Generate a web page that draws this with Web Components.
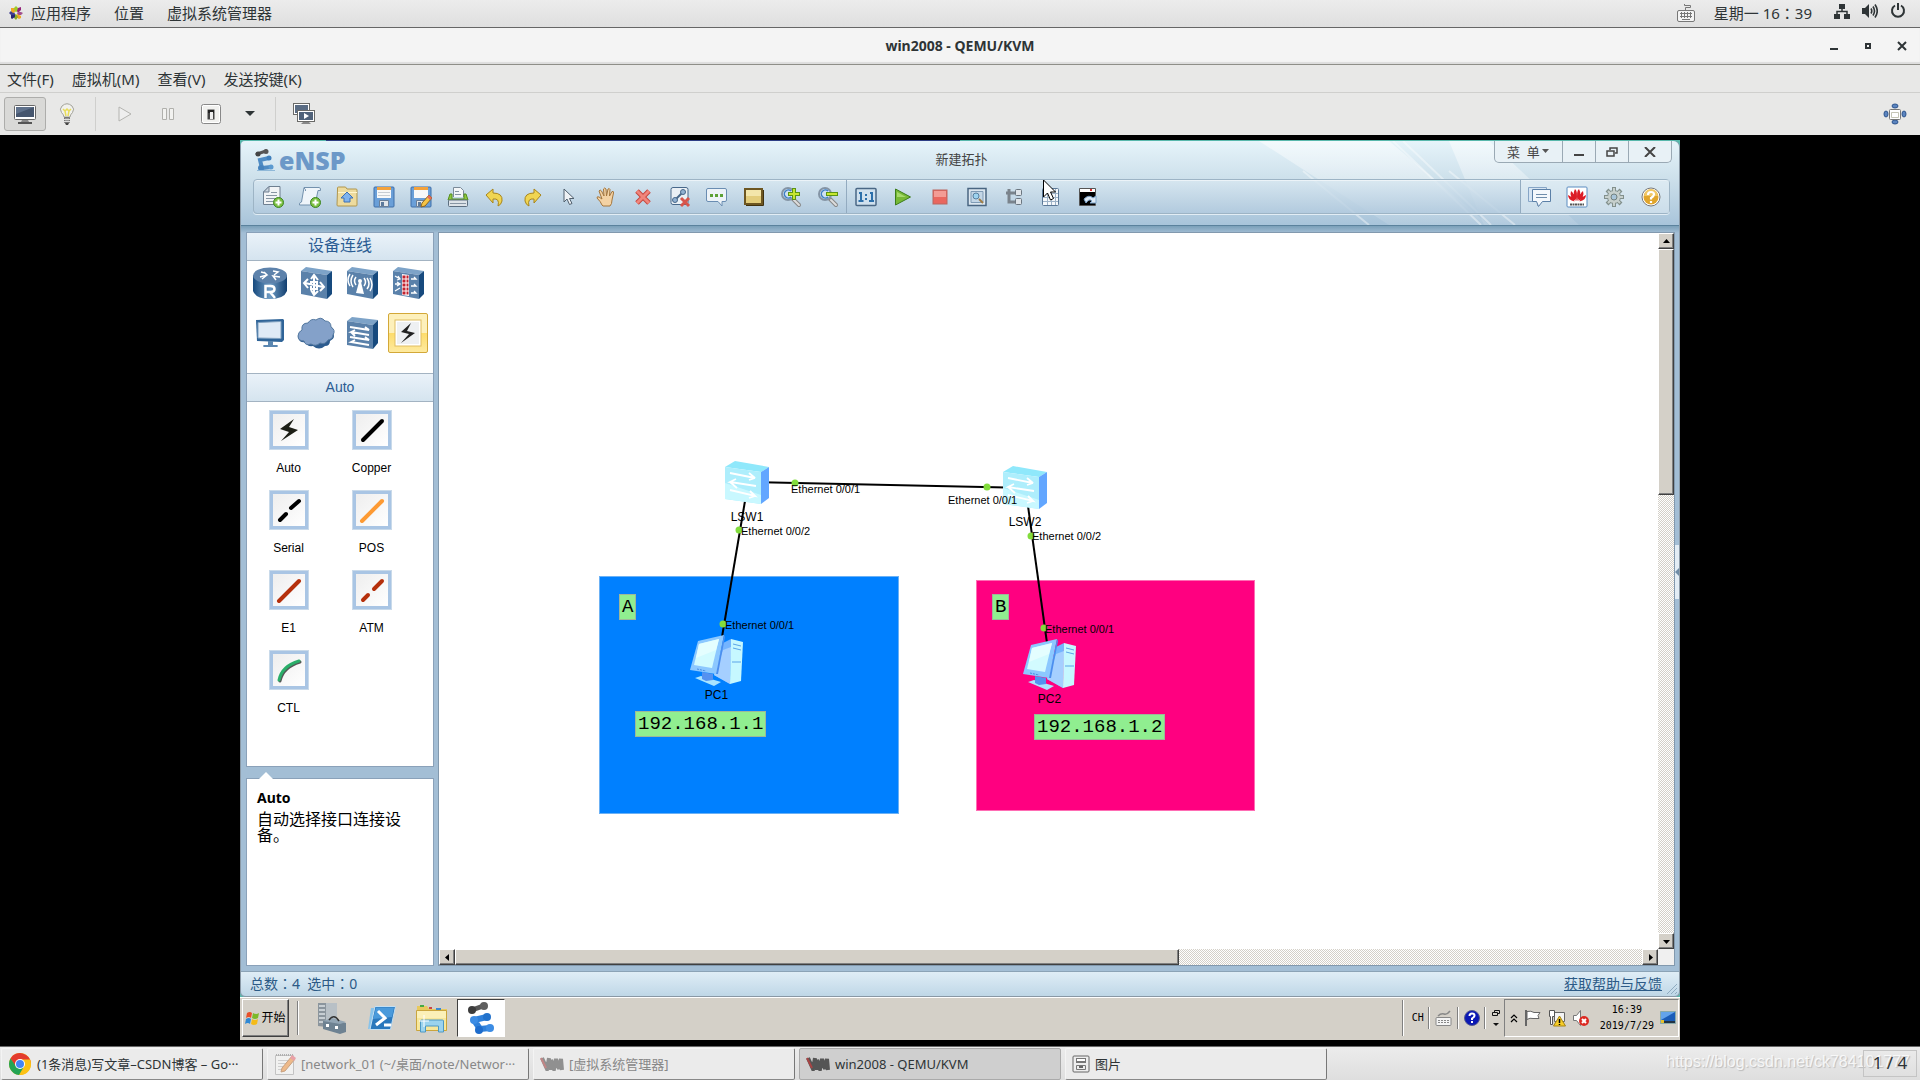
<!DOCTYPE html>
<html lang="zh-CN">
<head>
<meta charset="utf-8">
<title>win2008 - QEMU/KVM</title>
<style>
  html, body { height: 100%; }
  body {
    margin: 0;
    overflow: hidden;
    background: #000;
    color: #2e3436;
    font: 15px/20px "Noto Sans", "Noto Sans CJK SC", sans-serif;
  }
</style>
</head>
<body>
<host-desktop></host-desktop>

<script>
// name: [width, height, markup]
const icons = {
  gnome: [14, 14, `<path fill="#9ccd2a" d="M7 0l2 2v3l-2 1-2-1V2z"/><path fill="#932279" d="M9 2l3-1v3l-3 3-1-2z"/><path fill="#a14f8c" d="M10 6h2l2 1-2 2H9L8 7z"/><path fill="#efa724" d="M8 8l4 2v2l-2 1-3-2z"/><path fill="#8aab2a" d="M5 9l2-1 2 3-2 3-2-2z"/><path fill="#262577" d="M2 9l4-1v3l-3 2-1-1z"/><path fill="#3e3d8f" d="M0 7l2-2 4 2-1 2H2z"/><path fill="#efa724" d="M2 2h3l1 4-2 1-2-2z"/>`],
  keyboard: [20, 20, `<g fill="none" stroke="#777"><path d="M9.500 7V4.500h5V2.500h-6V1"/><rect x="1.500" y="7.500" width="17" height="11" rx="1.500" fill="#f4f4f4"/><path d="M4 10.500h12M4 13.500h12M6 16.500h8M5.500 9v6M8.500 9v6M11.500 9v6M14.500 9v6"/></g>`],
  network: [16, 16, `<path fill="#2e3436" d="M5 1h6v5H5zM0 11h6v5H0zM10 11h6v5h-6z"/><path fill="none" stroke="#2e3436" stroke-width="1.500" d="M8 6v3M3 11V8.500h10V11"/>`],
  volume: [16, 16, `<path fill="#2e3436" d="M0 5h3l4-4v14l-4-4H0z"/><path fill="none" stroke="#2e3436" stroke-width="1.600" d="M9 5.500q1.500 2.500 0 5M11 3.500q3 4.500 0 9M13 1.500q4.500 6.500 0 13"/>`],
  power: [16, 16, `<path fill="none" stroke="#2e3436" stroke-width="2" d="M5 2.500a6 6 0 1 0 6 0M8 0v7"/>`],
  wmin: [10, 10, `<path fill="#2e3436" d="M1 7h8v2H1z"/>`],
  wmax: [10, 10, `<path fill="none" stroke="#2e3436" stroke-width="2" d="M3 3h4v4H3z"/>`],
  wclose: [10, 10, `<path stroke="#2e3436" stroke-width="2" d="M1 1l8 8M9 1L1 9"/>`],
  monitor: [22, 20, `<rect x=".500" y="1.500" width="21" height="14" rx="1" fill="#fff" stroke="#666"/><path fill="#46566e" d="M2 3h18v10H2z"/><path fill="#60728c" d="M2 3h18L2 10z"/><path fill="#888" d="M8 16h6l1 2H7z"/><path fill="#555" d="M4 18h14v2H4z"/>`],
  bulb: [16, 22, `<path fill="#f1f1ec" stroke="#a2a29a" d="M5 14q0-2-2.500-4.500Q0 6 3 3q5-4.500 10 0 3 3 .500 6.500Q11 12 11 14z"/><path fill="none" stroke="#e8dc5a" stroke-width="1.500" d="M4 6l2 2 2-2 2 2 2-2M6 8l1 5M10 8l-1 5"/><path fill="#999" stroke="#777" d="M5.500 14.500h5v5h-5z"/><path stroke="#ddd" d="M5 16.500h6M5 18.500h6"/><path fill="#444" d="M6 20h4l-1 2H7z"/>`],
  play: [14, 16, `<path fill="#eee" stroke="#b4b4b0" d="M1 1l12 7-12 7z"/>`],
  pause: [14, 14, `<path fill="#f2f2f0" stroke="#b0b0ac" d="M1.500 1.500h4v11h-4zM8.500 1.500h4v11h-4z"/>`],
  shutdown: [20, 20, `<rect x=".500" y=".500" width="19" height="19" rx="2" fill="#fff" stroke="#888"/><rect x="2" y="2" width="16" height="16" fill="#f1f1ef"/><rect x="6.500" y="5.500" width="7" height="10" fill="#444"/><path fill="#222" d="M7 6h6v3H7z"/><path fill="#eee" d="M9 8h3v7H9z"/>`],
  down: [10, 6, `<path fill="#2e3436" d="M0 0h10L5 5z"/>`],
  snapshot: [22, 22, `<g stroke="#6a6a68"><rect x=".500" y=".500" width="16" height="11" fill="#fff"/><path stroke="none" fill="#5a6c84" d="M2 2h13v8H2z"/><rect x="4.500" y="7.500" width="17" height="11" fill="#fff"/><path stroke="none" fill="#50627a" d="M6 9h14v8H6z"/></g><path fill="#fff" d="M11 10l5 3-5 3z"/><path fill="#888" d="M10 19h6l2 2H8z"/>`],
  fullscreen: [24, 22, `<g fill="#5b84bf" stroke="#2f568e"><ellipse cx="12" cy="3" rx="3" ry="2"/><ellipse cx="12" cy="19" rx="3" ry="2"/><ellipse cx="3" cy="11" rx="2" ry="3"/><ellipse cx="21" cy="11" rx="2" ry="3"/></g><rect x="6.500" y="6.500" width="11" height="10" rx="1" fill="#fff" stroke="#777"/><path fill="none" stroke="#c5c5b5" d="M8.500 9.500h7v5h-7z"/>`],

  ensp: [20, 22, `<path stroke="#555" stroke-width="3" stroke-linecap="round" d="M2 5l9-3"/><circle cx="3" cy="5" r="2.500" fill="#444"/><circle cx="11" cy="2.500" r="2.500" fill="#555"/><path fill="none" stroke="#4f8cc4" stroke-width="4" stroke-linecap="round" d="M14 9L5 11l2 8 9-1"/><circle cx="14" cy="9" r="2.500" fill="#3f7fbc"/><circle cx="6" cy="19" r="3" fill="#4683bd"/><circle cx="16" cy="18" r="2.500" fill="#5b9ad0"/><path stroke="#8fb8d8" d="M2 21.500h18"/>`],
  enspBig: [28, 32, `<path stroke="#555" stroke-width="5" d="M5 8l14-5"/><circle cx="5" cy="8" r="4" fill="#3c3c3c"/><circle cx="17" cy="4" r="4" fill="#606060"/><path fill="none" stroke="#2f80da" stroke-width="6" stroke-linejoin="round" d="M20 15l-13 3 6 9 10-1"/><circle cx="20" cy="15" r="4" fill="#2272cc"/><circle cx="7" cy="18" r="4" fill="#3c8ce4"/><circle cx="12" cy="28" r="4" fill="#1e6ccc"/><circle cx="23" cy="26" r="4" fill="#3c8ce4"/>`],
  newTopo: [22, 22, `<path fill="#f2f4f6" stroke="#6e7f90" d="M7 .500h11v18H1.500V6z"/><path fill="#c9d4de" stroke="#6e7f90" d="M7 .500V6H1.500z"/><path stroke="#8795a3" d="M9 6.500h6M4 9.500h11M4 12.500h9M4 15.500h7"/><circle cx="16.500" cy="16.500" r="5" fill="#7cc142" stroke="#3b8420"/><path stroke="#fff" stroke-width="2" d="M16.500 13.500v6M13.500 16.500h6"/>`],
  newPaper: [24, 22, `<path fill="#eff5fa" stroke="#7391ad" d="M6 1.500h15q2 0 1.500 3H20L17 19H1.500q-1-2 2-3z"/><path stroke="#7391ad" d="M6 2q2 1 1.500 3"/><circle cx="17.500" cy="16.500" r="5" fill="#7cc142" stroke="#3b8420"/><path stroke="#fff" stroke-width="2" d="M17.500 13.500v6M14.500 16.500h6"/>`],
  open: [22, 22, `<path fill="#eddb9e" stroke="#b0964d" d="M1.500 4V2q0-1 1-1h7l1.500 2h9q1 0 1 1v15q0 1-1 1h-18q-1 0-1-1z"/><path stroke="#fff5cc" d="M2 6.500h19"/><path fill="#7fb3ee" stroke="#3e70b4" d="M11 6l6 6h-3v4H8v-4H5z"/>`],
  save: [22, 22, `<rect x="1" y="1" width="20" height="20" rx="1" fill="#6a9fd8" stroke="#3f6ea8"/><path fill="#f8f8f8" d="M4 4h14v8H4z"/><path fill="#f3a23c" d="M4 1h14v3H4z"/><path stroke="#c8cdd2" d="M5 6.500h12M5 9.500h12"/><path fill="#e2e6ea" stroke="#6a7f98" d="M6.500 14.500h9v6h-9z"/><path fill="#5d7a9c" d="M8 16h3v4H8z"/>`],
  saveAs: [22, 22, `<rect x="1" y="1" width="20" height="20" rx="1" fill="#6a9fd8" stroke="#3f6ea8"/><path fill="#f8f8f8" d="M4 4h14v8H4z"/><path fill="#f3a23c" d="M4 1h14v3H4z"/><path fill="#e2e6ea" stroke="#6a7f98" d="M6.500 14.500h9v6h-9z"/><path fill="#5d7a9c" d="M8 16h3v4H8z"/><path fill="#f6c445" stroke="#8a6424" d="M19 9l3 3-7 8-4 1 1-4z"/><path fill="#e26a5c" d="M19 9l3 3-2 2-3-3z"/>`],
  print: [22, 22, `<path fill="#f4f6f8" stroke="#7b8a98" d="M6.500 11V1.500h7l3 3V11"/><path stroke="#8795a3" d="M8 5.500h4M8 8.500h6"/><path fill="#8ec73c" stroke="#568f1d" d="M3 8h2v5h12V8h2l2 6H1z"/><rect x="1.500" y="14" width="19" height="6.500" rx="1" fill="#dde3e8" stroke="#5c6e80"/><path stroke="#8795a3" d="M3 17.500h16"/>`],
  undo: [20, 20, `<path fill="#f0d552" stroke="#a8851c" d="M1 8l7-6v4q10 0 9 8-1 4-4 5 2-8-5-7v4z"/>`],
  redo: [20, 20, `<path fill="#f0d552" stroke="#a8851c" d="M19 8l-7-6v4q-10 0-9 8 1 4 4 5-2-8 5-7v4z"/>`],
  pointer: [14, 18, `<path fill="#eef1f4" stroke="#51606e" d="M2 1v13l3-3 2.500 5.500 2.500-1-2.500-5H12z"/>`],
  hand: [20, 20, `<path fill="#f3d2a4" stroke="#a5763c" d="M6 18q-1-3-5-7 0-2 2-1l3 2-3-8q1-2 2.500 0L8 9 7.500 2q1-2 2.500 0l.500 7L12 2q1.500-1 2 .500L13.500 9 16 4.500q2-.500 1.500 1.500L16 13q0 4-2 6H7z"/>`],
  remove: [18, 18, `<path stroke="#c6473e" stroke-width="5" d="M3 3l12 12M15 3L3 15"/><path stroke="#f0857b" stroke-width="3" d="M3 3l12 12M15 3L3 15"/>`],
  unlink: [22, 22, `<rect x="2" y="1.500" width="17" height="17" rx="2" fill="#eaf0f5" stroke="#48688a"/><path stroke="#48688a" stroke-width="2" d="M5 15L15 5"/><circle cx="6" cy="14" r="2.500" fill="#91b2d2" stroke="#48688a"/><circle cx="14" cy="6" r="2.500" fill="#91b2d2" stroke="#48688a"/><path stroke="#d8554b" stroke-width="3" d="M12 12l8 8M20 12l-8 8"/>`],
  text: [22, 20, `<path fill="#edf3f8" stroke="#6a8db2" d="M2 1.500h17q1.500 0 1.500 1.500v10q0 1.500-1.500 1.500h-3V19l-4-4.500H2Q.500 14.500.500 13V3Q.500 1.500 2 1.500z"/><path stroke="#5da136" stroke-width="3" stroke-dasharray="3 2" d="M4 8.500h14"/>`],
  palette: [20, 18, `<rect x="1" y="1" width="17" height="15" fill="#e3cd7b" stroke="#6d5621" stroke-width="2"/><path fill="#f3e6aa" d="M2 2h15v6H2z"/><path stroke="#40310f" d="M2 17.500h17.500V2"/>`],
  zoomIn: [22, 22, `<path stroke="#888" stroke-width="4" stroke-linecap="round" d="M13 13l6 6"/><path stroke="#ddd" stroke-width="2" stroke-linecap="round" d="M14 14l5 5"/><circle cx="8" cy="8" r="6" fill="#cfe1f1" stroke="#8494a5" stroke-width="2"/><path fill="none" stroke="#3f7fc4" stroke-width="1.500" d="M11 5a4 4 0 1 0 0 6"/><path stroke="#5a9416" stroke-width="4" d="M14 2v12M8 8h12"/><path stroke="#c7e631" stroke-width="2" d="M14 3v10M9 8h10"/>`],
  zoomOut: [22, 22, `<path stroke="#888" stroke-width="4" stroke-linecap="round" d="M13 13l6 6"/><path stroke="#ddd" stroke-width="2" stroke-linecap="round" d="M14 14l5 5"/><circle cx="8" cy="8" r="6" fill="#cfe1f1" stroke="#8494a5" stroke-width="2"/><path fill="none" stroke="#3f7fc4" stroke-width="1.500" d="M11 5a4 4 0 1 0 0 6"/><path stroke="#5a9416" stroke-width="4" d="M9 8h12"/><path stroke="#c7e631" stroke-width="2" d="M10 8h10"/>`],
  fit: [22, 20, `<rect x="1" y="1.500" width="20" height="17" rx="1" fill="#cfe0ee" stroke="#4a6785" stroke-width="1.500"/><path fill="none" stroke="#2c6faa" stroke-width="2" d="M4 6h2v7M3.500 14h5M15 6h2v7M14 14h5"/><path fill="#2c6faa" d="M10 7h2v2h-2zM10 11h2v2h-2z"/>`],
  start: [18, 18, `<path fill="#77b936" stroke="#3c7d1b" d="M1.500 1l15 8-15 8z"/><path fill="#a6d96c" d="M3 4l9 5H3z"/>`],
  stop: [16, 16, `<rect x="1" y="1" width="14" height="14" fill="#e9675f" stroke="#b96661"/><path fill="#f39c95" d="M2 2h12v6H2z"/>`],
  capture: [20, 20, `<rect x="1" y="1.500" width="18" height="17" fill="#dce7f0" stroke="#496581" stroke-width="1.500"/><path fill="#c3d6e6" stroke="#7f9bb5" d="M4 4.500h12v11H4z"/><circle cx="9" cy="9" r="3" fill="#9dd3ef" stroke="#58809f"/><path stroke="#a07d45" stroke-width="2" d="M12 12l4 4"/>`],
  tree: [18, 18, `<path fill="none" stroke="#7a838c" stroke-width="3" d="M4 1v13h7M1 5h10"/><rect x="10.500" y="1.500" width="6" height="6" rx="1" fill="#dfe4e9" stroke="#6b7680"/><rect x="10.500" y="10.500" width="6" height="6" rx="1" fill="#dfe4e9" stroke="#6b7680"/>`],
  table: [18, 20, `<rect x=".500" y="1.500" width="16" height="17" rx="1" fill="#f5f8fb" stroke="#5b7897"/><path stroke="#9db2c7" d="M1 6.500h15M1 10.500h15M1 14.500h15M5.500 2v16M9.500 2v16M13.500 2v16"/>`],
  console: [20, 20, `<path fill="#fff" stroke="#555" d="M1.500 1.500h16v17h-16z"/><path fill="#000" d="M2 5h15v13H2z"/><path fill="#d33" d="M12 2h2v2h-2z"/><path fill="#dfeaf5" stroke="#7ba4cb" d="M6 12q5-5 9-1l3-2v7h-6l2-2q-3-3-6 2z"/>`],
  chat: [24, 22, `<path fill="#d5e4f2" stroke="#86a5c6" d="M.500 1.500h18v14h-4l-5 4v-4h-9z"/><path fill="#f4f8fc" stroke="#5b80a7" d="M4.500 3.500h18v12h-8l-4 5-2-5h-4z"/><path stroke="#6f8dab" d="M8 8.500h11M8 11.500h11"/>`],
  huawei: [22, 22, `<rect x="1" y="1" width="20" height="20" rx="1" fill="#fff" stroke="#5b8cc0"/><g fill="#dc1c26"><path d="M10.500 15Q6 8 9 3q3 2 1.500 12zM11.500 15Q16 8 13 3q-3 2-1.500 12zM9.500 15Q3 11 5 5q4 3 4.500 10zM12.500 15Q19 11 17 5q-4 3-4.500 10zM8.500 15.500Q2 14 2 9q5 2 6.500 6.500zM13.500 15.500Q20 14 20 9q-5 2-6.500 6.500z"/></g><path stroke="#555" stroke-width="2" stroke-dasharray="2 .500" d="M4 18.500h14"/>`],
  gear: [20, 20, `<path stroke="#82908c" stroke-width="4" d="M10 0v20M0 10h20M3 3l14 14M17 3L3 17"/><circle cx="10" cy="10" r="6.500" fill="#c7d0cd" stroke="#82908c"/><path stroke="#c7d0cd" stroke-width="2" d="M10 1v18M1 10h18M4 4l12 12M16 4L4 16"/><circle cx="10" cy="10" r="3" fill="#a8c4d8" stroke="#71807e"/>`],
  help: [20, 20, `<circle cx="10" cy="10" r="9" fill="#fff" stroke="#777"/><circle cx="10" cy="10" r="7.500" fill="#e0a52c"/><path fill="#f0c766" d="M3 9a7 7 0 0 1 14 0z"/><path fill="none" stroke="#fff" stroke-width="2.200" d="M7 8q0-3 3-3t3 2.500Q13 9 10 11v1.500M10 14v2"/>`],
  restore: [12, 10, `<path fill="none" stroke="#444" stroke-width="1.500" d="M4 3V1h7v5H9M1 4h7v5H1z"/>`],
  bigX: [12, 10, `<path stroke="#444" stroke-width="2" d="M1 0l10 10M11 0L1 10"/>`],
  minus: [12, 10, `<path fill="#444" d="M1 7h10v2H1z"/>`],
  smallDown: [8, 5, `<path fill="#555" d="M0 0h7L3.500 4z"/>`],
  cursor: [14, 24, `<path fill="#fff" stroke="#000" d="M1.500 1v17l4-4 3 7 3-1.500-3-6.500h5z"/>`],

  router: [36, 32, `<defs><linearGradient id="g"><stop offset="0" stop-color="#174a7e"/><stop offset=".500" stop-color="#6f9cc4"/><stop offset="1" stop-color="#123f70"/></linearGradient></defs><path fill="url(#g)" d="M1 8v16q3 8 17 8t17-8V8z"/><ellipse cx="18" cy="8.500" rx="17" ry="8" fill="#5d82ab"/><path fill="none" stroke="#fff" stroke-width="1.500" d="M8 10l7-2-3-3M15 8l-5 4M21 4l5 1-4 3M28 10l-7-1 3 4M9 5l4 1"/><path fill="none" stroke="#fff" stroke-width="2.500" d="M13.500 31V19h5q4 0 4 3t-4 3h-5M18 25l5 6"/>`],
  switchBox: [32, 32, `<path fill="#7da3c8" d="M1 4l5-4 26 4-5 4z"/><path fill="#174a7e" d="M27 8l5-4v23l-5 5z"/><path fill="#5a81aa" d="M1 4l26 4v24L1 27z"/><path fill="none" stroke="#fff" stroke-width="2" d="M14 9v18M5 16l18 4M11 12l3-4 4 5M11 23l3 5 4-4M8 12l-4 4 4 5M20 15l4 5-4 4M11 15h6v7h-6z"/>`],
  wlan: [32, 32, `<path fill="#7da3c8" d="M1 4l5-4 26 4-5 4z"/><path fill="#174a7e" d="M27 8l5-4v23l-5 5z"/><path fill="#5a81aa" d="M1 4l26 4v24L1 27z"/><path fill="#fff" d="M13 15h2l3 12-8-1z"/><circle cx="14" cy="14" r="2" fill="#fff"/><path fill="none" stroke="#fff" stroke-width="1.500" d="M10 10q-3 4 0 8M7 8q-4 6 0 12M4 7q-4 6 0 12M18 11q3 4 0 8M21 11q4 6 0 11M24 11q4 7 0 13"/>`],
  firewall: [32, 32, `<path fill="#7da3c8" d="M1 4l5-4 26 4-5 4z"/><path fill="#174a7e" d="M27 8l5-4v23l-5 5z"/><path fill="#5a81aa" d="M1 4l26 4v24L1 27z"/><path fill="#fff" d="M10 7l7 1v21l-7-1z"/><path stroke="#c2222e" stroke-width="3" stroke-dasharray="3 1" d="M10.500 10h6M10.500 14h6M10.500 18h6M10.500 22h6M10.500 26h6"/><path fill="none" stroke="#fff" stroke-width="1.300" d="M3 9l5 3M3 17h5M3 24l5-3M6 9l2 3-3 1M5 15l3 2-3 2M19 12h5l-2-2M19 19h5l-2-2M19 26h5l-2-2"/>`],
  pcFlat: [30, 30, `<path fill="#2f6498" d="M1 2l27-1 1 1v20l-2 2-25-1z"/><path fill="#dfeaf6" stroke="#7fa0c0" d="M3 4.500l23-1v17l-23-.500z"/><path fill="#5b87b1" d="M13 23h5v4h4q2 1 0 2H9q-2-1 0-2h4z"/>`],
  cloud: [38, 32, `<path fill="#2d5c8f" d="M5 14q-6 4-3 9 2 3 6 2 2 5 8 4 6 5 12 0 5 0 5-5 6-3 3-8V11z"/><path fill="#84a1c9" stroke="#53789f" d="M5 13q-1-7 6-7 3-5 8-3 5-4 9 1 6 0 6 6 5 3 2 8 0 4-5 5-3 5-8 3-4 4-9 1-6 2-7-3-6 0-6-5 0-4 4-6z"/>`],
  others: [32, 32, `<path fill="#7da3c8" d="M1 4l5-4 26 3-5 5z"/><path fill="#174a7e" d="M27 8l5-5v23l-5 6z"/><path fill="#5a81aa" d="M1 4l26 4v24L1 28z"/><path fill="none" stroke="#fff" stroke-width="1.800" d="M4 10l19 3-4-3M23 18L5 15l4-2M5 15l4 4M4 20l19 3-4-3M23 28L5 25l4-2"/>`],
  autoBtn: [28, 28, `<rect x="1" y="1" width="26" height="26" fill="#fff" stroke="#e0bd62"/><path fill="#eef0f2" d="M3 3h22v22H3z"/><path fill="#222" d="M17 4L7 13l8 2-8 9 14-10-8-2z"/>`],

  cAuto: [26, 26, `<path fill="#1d1f16" d="M18 2L4 12l9 3-8 9 17-11-9-3z"/>`],
  cCopper: [26, 26, `<path stroke="#000" stroke-width="4" stroke-linecap="round" d="M4 23L23 4"/>`],
  cSerial: [26, 26, `<path stroke="#000" stroke-width="4" stroke-linecap="round" d="M4 23l6-6M15 11l8-7"/>`],
  cPos: [26, 26, `<path stroke="#fd9a33" stroke-width="4" stroke-linecap="round" d="M3 24L23 4"/>`],
  cE1: [26, 26, `<path stroke="#b5300c" stroke-width="4" stroke-linecap="round" d="M3 24L23 4"/>`],
  cAtm: [26, 26, `<path stroke="#b5300c" stroke-width="4" stroke-linecap="round" d="M4 23l5-5M15 12l8-8"/>`],
  cCtl: [26, 26, `<path fill="none" stroke="#555" stroke-width="3" stroke-linecap="round" d="M4 24Q7 10 24 5"/><path fill="none" stroke="#2aae69" stroke-width="3" stroke-linecap="round" d="M3 23Q6 9 23 4"/>`],

  lsw: [44, 44, `<path fill="#8fe8fb" d="M0 6L10 0l34 6-8 5z"/><path fill="#62a6ff" d="M36 11l8-5v31l-8 6z"/><path fill="#aeeefc" d="M0 6l36 5v32L0 38z"/><path fill="#c9f8ff" d="M0 22l36 12v9L0 38z"/><path fill="none" stroke="#fff" stroke-width="1.800" d="M5 12l25 5-6-5M30 17l-6 2M31 25L5 21l6-3M5 21l7 6M5 29l25 6-5-5M30 35l-6 2"/>`],
  pc: [53, 52, `<path fill="#74b4ff" d="M33 8l8-4-1 45-16-9z"/><path fill="#a5cfff" d="M33 15l8-3-1 37-16-9z"/><path fill="#c6f8ff" d="M41 4l12 3-2 39-11 3z"/><path stroke="#5aa4e8" d="M43 9l8 2M43 13l8 2M42 27h9"/><path fill="#a9e4ff" d="M5 43l6-2 20 6-7 4z"/><path fill="#5591f0" d="M12 37l11 2v6l-7 1-4-2z"/><path fill="#8cc8ff" d="M8 6l26-6-8 39-26-4z"/><path fill="#4b8eee" d="M34 0l1 2-7 37h-2z"/><path fill="#d2fbff" d="M9 9l20-5-7 29-18-3z"/><path fill="#e4feff" d="M9 9l20-5-3 11L6 23z"/><path stroke="#4a8ce0" stroke-dasharray="2 1" d="M7 34l9 2"/>`],

  winFlag: [16, 16, `<path fill="#e8502a" d="M2 3q3-2 5 0L6 8Q4 6 1 8z"/><path fill="#7cb928" d="M8 3q3 2 6 0l-1 5q-3 2-6 0z"/><path fill="#2f88d4" d="M1 9q3-2 5 0l-1 5q-2-2-5 0z"/><path fill="#f5bb18" d="M7 9q3 2 6 0l-1 5q-3 2-6 0z"/>`],
  server: [30, 32, `<path fill="#8b959d" d="M1 1h8v24l-8-1z"/><path stroke="#dce1e5" stroke-width="1.500" d="M2 4h6M2 8h6M2 12h6M2 16h6M2 20h6"/><path fill="#b8c0c6" d="M9 1h11v22H9z"/><path fill="#6e8292" d="M6 19l9-2 14 4v9l-6 2-17-5z"/><path fill="#92a5b4" d="M6 19l9-3 14 4-6 2z"/><path fill="none" stroke="#333" stroke-width="1.500" d="M12 18q5-7 10 1"/><path fill="#fff" d="M9 22h3v3H9zM18 24h3v3h-3z"/>`],
  shell: [30, 26, `<path fill="#89c3ea" d="M4 3h4L4 24H1z"/><path fill="#2a78bd" stroke="#c4dff2" d="M8 1.500h20.500l-5 23H3z"/><path fill="#4a9adb" d="M9 2.500h18L25 12 6 14z"/><path fill="none" stroke="#fff" stroke-width="3" d="M11 6l7 7-9 7M17 20h7"/>`],
  explorer: [34, 30, `<path fill="#e8c95e" d="M2 3h10l2 3h18v22H2z"/><path fill="#f7e79c" stroke="#caa53d" d="M1.500 7.500h30v20h-30z"/><path fill="#4a4" d="M5 2h4v2H5z"/><path fill="#c44" d="M14 4h3v2h-3z"/><path fill="#3b8bd0" d="M21 5h5v2h-5z"/><path fill="#fbf0b8" d="M2 8h29v7H2z"/><path fill="#9bd3ee" stroke="#4c98c4" d="M5.500 29V18q0-1 1-1h21q1 0 1 1v11h-5v-6h-13v6z"/><path stroke="#fff" d="M9 12v12M4 18h10"/>`],
  ime: [18, 16, `<path fill="none" stroke="#888" stroke-width="1.500" d="M3 6q3-3 6-2t6-3"/><rect x="1" y="7.500" width="15" height="8" rx="1" fill="#f4f4f4" stroke="#888"/><path stroke="#888" stroke-dasharray="2 1" d="M3 10.500h12M3 12.500h12"/>`],
  blueHelp: [16, 16, `<circle cx="8" cy="8" r="7.500" fill="#0b18b4" stroke="#555a90"/><path fill="none" stroke="#fff" stroke-width="2" d="M5.500 6q0-2.500 2.500-2.500t2.500 2Q10.500 7 8 8.500V10M8 11v2"/>`],
  langOpts: [10, 18, `<path fill="none" stroke="#111" d="M3.500 3V1.500h5v3H7M1.500 3.500h5v3h-5z"/><path fill="#111" d="M2 14h6l-3 3z"/>`],
  chevrons: [8, 10, `<path fill="none" stroke="#000" stroke-width="1.200" d="M1 5l3-3 3 3M1 9l3-3 3 3"/>`],
  flag: [18, 18, `<path stroke="#666" stroke-width="2" d="M2 1v16"/><path fill="#fff" stroke="#666" d="M3 2.500q4-1 7 1h6l-2 3 1 3H9q-3-1-6 1z"/>`],
  netWarn: [18, 18, `<path fill="#f4f4f4" stroke="#666" d="M6.500 3.500h10v9h-10z"/><path fill="#fff" stroke="#555" d="M1.500 1.500h5v6h-2v8h-2v-8h-1z"/><path fill="#f7cd27" stroke="#a58212" d="M11.500 7l6 10h-12z"/><path stroke="#000" stroke-width="1.500" d="M11.500 10v4M11.500 15v1"/>`],
  mute: [18, 18, `<path fill="#fff" stroke="#777" d="M1.500 6.500h3l4-5v15l-4-5h-3z"/><circle cx="12" cy="12" r="5" fill="#dc2a22"/><path stroke="#fff" stroke-width="2" d="M10 10l4 4M14 10l-4 4"/>`],
  showDesk: [16, 14, `<path fill="#1b5db8" stroke="#8aa" d="M.500.500h15v12H.500z"/><path fill="#63a4ec" d="M1 1h14L1 9z"/><path fill="#234" d="M1 10h14v2H1z"/><path fill="#e6c02e" d="M1 9h3v3H1z"/>`],
  chrome: [24, 24, `<circle cx="12" cy="12" r="11" fill="#fbc116"/><path fill="#e33b2e" d="M12 12H23A11 11 0 0 0 2.500 6.500L7 14z"/><path fill="#fbc116" d="M12 7.500h10A11 11 0 0 1 11 23z"/><path fill="#23a455" d="M2.500 6.500A11 11 0 0 0 11 23l5-8.500-7.500.500z"/><circle cx="12" cy="12" r="5" fill="#fff"/><circle cx="12" cy="12" r="4" fill="#4385f5"/>`],
  note: [22, 24, `<path fill="#f6f6f4" stroke="#aaa" d="M1.500 3.500h18v19h-18z"/><path stroke="#888" stroke-width="2" stroke-dasharray="1 1" d="M2 3h17"/><path stroke="#bbb" d="M4 8.500h12M4 11.500h9M4 14.500h7M4 17.500h5"/><path fill="#f09a4a" stroke="#b0703a" d="M18 4l3 3L11 19l-4 1 1-4z"/><path fill="#e8707a" d="M18 3l4 3-2 3-4-3z"/>`],
  virt: [24, 14, `<path fill="none" stroke="#555" stroke-width="4" d="M2 1l5 11L9 1M11 13V3l3 9 2-10 3 10 2-10 1 11"/><path stroke="#a44" stroke-width="2" d="M1 1l5 10"/>`],
  imgView: [18, 18, `<rect x="1" y="1" width="16" height="16" rx="1" fill="#eee" stroke="#666"/><path fill="#777" d="M4 3h10v5H4z"/><path fill="#fff" d="M5 4h8v2H5z"/><path fill="none" stroke="#777" d="M4.500 10.500h9v4h-9z"/><path fill="#666" d="M7 11h4v2H7z"/>`]
};

// Clones the template of the class into an open shadow root
class BaseElement extends HTMLElement {
  constructor() {
    super();
    this._sR = this.attachShadow({ mode: "open" });
    const template = document.createElement("template");
    template.innerHTML = this.constructor.html;
    this._sR.appendChild(template.content.cloneNode(true));
  }
}

const iconButtons = list => list.map(([name, label]) =>
  `<button type="button" aria-label="${label}"><ui-icon name="${name}"></ui-icon></button>`).join("");

class UiIcon extends BaseElement {
  static html = `<style>:host { display: inline-flex; flex: none; } svg { display: block; }</style><svg aria-hidden="true"></svg>`;

  static get observedAttributes() {
    return ["name"];
  }

  attributeChangedCallback() {
    const [w, h, markup] = icons[this.getAttribute("name")];
    const $svg = this._sR.querySelector("svg");
    $svg.setAttribute("width", w);
    $svg.setAttribute("height", h);
    $svg.setAttribute("viewBox", `0 0 ${w} ${h}`);
    $svg.setAttribute("fill", "none");
    $svg.innerHTML = markup;
  }
}
customElements.define("ui-icon", UiIcon);

class TopPanel extends BaseElement {
  static html = `
    <style>
    :host { display: flex; align-items: center; justify-content: space-between; height: 25px; padding: 0 14px 2px 9px;
      background: linear-gradient(#ececec, #dfdfdf); border-bottom: 1px solid #666; line-height: 24px; }
    nav, .status { display: flex; align-items: center; }
    button { all: unset; font: inherit; color: inherit; }
    nav button { display: flex; align-items: center; gap: 8px; margin-right: 23px; }
    .status { gap: 12px; }
    .clock { margin: 0 10px 0 6px; font-family: "Noto Sans", "Noto Sans CJK TC", sans-serif; }
    </style>
    <nav>
      <button type="button"><ui-icon name="gnome"></ui-icon>应用程序</button>
      <button type="button">位置</button>
      <button type="button">虚拟系统管理器</button>
    </nav>
    <div class="status">
      <ui-icon name="keyboard"></ui-icon>
      <time class="clock" lang="zh-TW">星期一 16：39</time>
      ${iconButtons([["network", "网络"], ["volume", "音量"], ["power", "电源"]])}
    </div>`;
}
customElements.define("top-panel", TopPanel);

class HostTitlebar extends BaseElement {
  static html = `
    <style>
    :host { display: grid; grid-template-columns: 1fr auto 1fr; align-items: center; height: 36px;
      background: #f4f4f4; border-bottom: 1px solid #8e8e88; box-shadow: inset 0 -2px 1px #ddd; }
    h1 { grid-column: 2; margin: 0; font-size: 14px; font-weight: 700; line-height: 20px; }
    .controls { justify-self: end; display: flex; padding-right: 1px; }
    button { all: unset; display: flex; justify-content: center; width: 34px; }
    </style>
    <h1><slot></slot></h1>
    <div class="controls">${iconButtons([["wmin", "最小化"], ["wmax", "最大化"], ["wclose", "关闭"]])}</div>`;
}
customElements.define("host-titlebar", HostTitlebar);

class HostMenubar extends BaseElement {
  static html = `
    <style>
    :host { display: flex; gap: 18px; height: 27px; padding: 0 7px; background: #e8e8e7; border-bottom: 1px solid #cfcfcd; }
    button { all: unset; line-height: 24px; }
    </style>
    <button type="button">文件(F)</button>
    <button type="button">虚拟机(M)</button>
    <button type="button">查看(V)</button>
    <button type="button">发送按键(K)</button>`;
}
customElements.define("host-menubar", HostMenubar);

class HostToolbar extends BaseElement {
  static html = `
    <style>
    :host { display: flex; align-items: center; height: 42px; padding: 0 4px; background: #e8e8e7; }
    button { all: unset; box-sizing: border-box; display: flex; align-items: center; justify-content: center; width: 42px; height: 34px; }
    .run button { width: 43px; }
    .run { display: flex; }
    .run .more { width: 36px; }
    .active { background: #d9d9d7; border: 1px solid #adadab; border-radius: 3px; }
    hr { width: 1px; height: 34px; margin: 0 7px; border: 0; background: #cfcfcd; }
    .end { margin-left: auto; }
    </style>
    <button type="button" class="active" aria-label="控制台"><ui-icon name="monitor"></ui-icon></button>
    <button type="button" aria-label="详情"><ui-icon name="bulb"></ui-icon></button>
    <hr>
    <div class="run">
      ${iconButtons([["play", "运行"], ["pause", "暂停"], ["shutdown", "关机"]])}
      <button type="button" class="more" aria-label="更多"><ui-icon name="down"></ui-icon></button>
    </div>
    <hr>
    <button type="button" aria-label="快照"><ui-icon name="snapshot"></ui-icon></button>
    <button type="button" class="end" aria-label="全屏"><ui-icon name="fullscreen"></ui-icon></button>`;
}
customElements.define("host-toolbar", HostToolbar);

class EnspHeader extends BaseElement {
  static html = `
    <style>
    :host { position: relative; display: block; padding: 0 9px 11px 12px; border-radius: 4px 6px 0 0;
      background: linear-gradient(#e6f4fa, #cde0eb 45%, #a8c4da); border-bottom: 1px solid #5b829d; }
    .shine { position: absolute; right: 0; top: 0; width: 420px; height: 100%; }
    .top { position: relative; display: grid; grid-template-columns: 1fr auto 1fr; height: 38px; }
    .brand { display: flex; align-items: center; gap: 4px; padding-left: 2px; font: 800 25px/24px "Open Sans", sans-serif; color: #6c98c8; }
    h2 { margin: 0; font-size: 13px; font-weight: 400; line-height: 36px; color: #444; }
    .controls { justify-self: end; display: flex; height: 21px; margin-right: -2px; border: 1px solid #9aa9b4; border-top: 0;
      border-radius: 0 0 5px 5px; background: #e8f1f6; }
    button { all: unset; box-sizing: border-box; display: flex; align-items: center; justify-content: center; }
    .controls button { width: 33px; border-left: 1px solid #9aa9b4; }
    .controls .menu { width: 67px; gap: 2px; border: 0; font-size: 13px; color: #444; white-space: pre; }
    .controls .close { width: 43px; }
    .bar { position: relative; display: flex; height: 33px; border: 1px solid #9db4c5; border-radius: 4px;
      background: linear-gradient(#d9e8f1cc, #b2cadecc); box-shadow: inset 0 1px #fff8, 0 1px #e2edf5; }
    .bar button { width: 37px; }
    .group { display: flex; }
    .run { border-left: 1px solid #93abc0; }
    .end { margin-left: auto; border-left: 1px solid #93abc0; background: #e4eff680; }
    .cursor { position: absolute; left: calc(50% + 80px); top: -1px; }
    </style>
    <svg class="shine" viewBox="0 0 420 84" preserveAspectRatio="none" aria-hidden="true">
      <defs><linearGradient id="f" x2="0" y2="1"><stop offset="0" stop-color="#fff" stop-opacity=".500"/><stop offset="1" stop-color="#fff" stop-opacity=".100"/></linearGradient></defs>
      <path fill="url(#f)" d="M0 0h130l100 84H130z"/>
      <path fill="url(#f)" d="M190 0h40l90 84H225z"/>
      <path stroke="#fff" opacity=".400" stroke-width="2" d="M134 0l88 84M144 0l88 84M44 30l66 54M190 30l66 54"/>
    </svg>
    <div class="top">
      <div class="brand"><ui-icon name="ensp"></ui-icon>eNSP</div>
      <h2>新建拓扑</h2>
      <div class="controls">
        <button type="button" class="menu">菜  单<ui-icon name="smallDown"></ui-icon></button>
        <button type="button" aria-label="最小化"><ui-icon name="minus"></ui-icon></button>
        <button type="button" aria-label="还原"><ui-icon name="restore"></ui-icon></button>
        <button type="button" class="close" aria-label="关闭"><ui-icon name="bigX"></ui-icon></button>
      </div>
    </div>
    <div class="bar">
      <div class="group">${iconButtons([
        ["newTopo", "新建拓扑"], ["newPaper", "新建试卷工程"], ["open", "打开"], ["save", "保存"],
        ["saveAs", "另存为"], ["print", "打印"], ["undo", "撤销"], ["redo", "恢复"],
        ["pointer", "选择"], ["hand", "拖动"], ["remove", "删除"], ["unlink", "删除连线"],
        ["text", "文本"], ["palette", "调色板"], ["zoomIn", "放大"], ["zoomOut", "缩小"]])}</div>
      <div class="group run">${iconButtons([
        ["fit", "原始比例"], ["start", "开启设备"], ["stop", "停止设备"], ["capture", "数据抓包"],
        ["tree", "网格"], ["table", "接口列表"], ["console", "命令行"]])}</div>
      <div class="group end">${iconButtons([["chat", "论坛"], ["huawei", "官网"], ["gear", "设置"], ["help", "帮助"]])}</div>
      <ui-icon class="cursor" name="cursor"></ui-icon>
    </div>`;
}
customElements.define("ensp-header", EnspHeader);

class CableItem extends BaseElement {
  static html = `
    <style>
    button { all: unset; display: flex; flex-direction: column; align-items: center; width: 100%; }
    .frame { box-sizing: border-box; display: flex; align-items: center; justify-content: center; width: 40px; height: 40px;
      border: 4px solid #a9c5e4; outline: 1px solid #c9daea; outline-offset: -1px; background: linear-gradient(135deg, #eee, #fff); }
    .name { font: 12px/16px "Liberation Sans", sans-serif; color: #000; margin-top: 10px; }
    </style>
    <button type="button"><span class="frame"><ui-icon></ui-icon></span><span class="name"><slot></slot></span></button>`;

  connectedCallback() {
    this._sR.querySelector("ui-icon").setAttribute("name", this.getAttribute("icon"));
  }
}
customElements.define("cable-item", CableItem);

class DevicePalette extends BaseElement {
  static html = `
    <style>
    :host { display: flex; flex-direction: column; width: 188px; }
    .box { box-sizing: border-box; border: 1px solid #8aa1b9; background: #fff; }
    .list { flex: 1; }
    h3 { height: 27px; margin: 0; border-bottom: 1px solid #a3b3c2; background: linear-gradient(#eaf2f9, #d5e4ef);
      font: 14px/26px "Liberation Sans", "Noto Sans CJK SC", sans-serif; text-align: center; color: #2b5c93; }
    h3.cjk { font-size: 16px; }
    .kinds { display: grid; grid-template-columns: repeat(4, 46px); grid-auto-rows: 44px; row-gap: 6px; height: 112px;
      border-bottom: 1px solid #a3b3c2; }
    button { all: unset; box-sizing: border-box; display: flex; align-items: center; justify-content: center; }
    .selected { place-self: center; width: 40px; height: 40px; border: 1px solid #d3a838; border-radius: 2px;
      background: linear-gradient(#fdf0bb 50%, #fddc6b 50%, #feeaa0); }
    .cables { display: grid; grid-template-columns: 83px 83px; grid-auto-rows: 80px; padding-top: 8px; }
    .info { position: relative; height: 188px; margin-top: 11px; padding: 11px 10px; color: #000;
      font: 16px/16px "Noto Sans CJK SC", sans-serif; }
    .info::before { content: ""; position: absolute; left: 12px; top: -7px; border: 7px solid transparent; border-top: 0; border-bottom-color: #fff; }
    .info p { width: 148px; margin: 0; }
    .info b { display: block; margin-bottom: 4px; font: 700 14px/16px "Noto Sans", sans-serif; }
    </style>
    <section class="box list">
      <h3 class="cjk">设备连线</h3>
      <div class="kinds">
        ${iconButtons([["router", "路由器"], ["switchBox", "交换机"], ["wlan", "无线局域网"], ["firewall", "防火墙"],
          ["pcFlat", "终端"], ["cloud", "云"], ["others", "其他设备"]])}
        <button type="button" class="selected" aria-label="设备连线"><ui-icon name="autoBtn"></ui-icon></button>
      </div>
      <h3>Auto</h3>
      <div class="cables">
        <cable-item icon="cAuto">Auto</cable-item>
        <cable-item icon="cCopper">Copper</cable-item>
        <cable-item icon="cSerial">Serial</cable-item>
        <cable-item icon="cPos">POS</cable-item>
        <cable-item icon="cE1">E1</cable-item>
        <cable-item icon="cAtm">ATM</cable-item>
        <cable-item icon="cCtl">CTL</cable-item>
      </div>
    </section>
    <section class="box info"><b>Auto</b><p>自动选择接口连接设备。</p></section>`;
}
customElements.define("device-palette", DevicePalette);

// Classic Windows scroll bar, direction="vertical" or "horizontal"
class ScrollTrack extends BaseElement {
  static html = `
    <style>
    :host { display: flex; background: conic-gradient(#fff 25%, #d4d0c8 0 50%, #fff 0 75%, #d4d0c8 0) 0 0 / 2px 2px; }
    :host([direction="vertical"]) { flex-direction: column; }
    button, .thumb { all: unset; box-sizing: border-box; background: #d4d0c8; border: 1px solid; border-color: #fff #404040 #404040 #fff;
      box-shadow: inset -1px -1px #808080; }
    button { display: flex; flex: none; align-items: center; justify-content: center; width: 16px; height: 16px; }
    .room { flex: 1; }
    .room, .room .thumb { display: flex; }
    .thumb { width: 61%; height: 100%; }
    :host([direction="vertical"]) .thumb { width: 100%; height: 36%; }
    svg { display: block; }
    </style>
    <button type="button" aria-label="向前"><svg width="7" height="7"><path/></svg></button>
    <div class="room"><div class="thumb"></div></div>
    <button type="button" aria-label="向后"><svg width="7" height="7"><path/></svg></button>`;

  connectedCallback() {
    const vertical = this.getAttribute("direction") === "vertical";
    const arrows = vertical ? ["M0 5h7L3.500 1z", "M0 2h7L3.500 6z"] : ["M5 0v7L1 3.500z", "M2 0v7l4-3.500z"];
    this._sR.querySelectorAll("path").forEach(($path, i) => $path.setAttribute("d", arrows[i]));
  }
}
customElements.define("scroll-track", ScrollTrack);

const topology = {
  areas: [
    { x: 160, y: 343, w: 299, h: 237, fill: "#0080ff", edge: "#6bb1f5" },
    { x: 537, y: 347, w: 278, h: 230, fill: "#ff0080", edge: "#ff6db4" }
  ],
  links: [[308, 249, 586, 255], [306, 268, 283, 404], [589, 273, 608, 410]],
  devices: [
    { icon: "lsw", name: "LSW1", x: 286, y: 228 },
    { icon: "lsw", name: "LSW2", x: 564, y: 233 },
    { icon: "pc", name: "PC1", x: 251, y: 402 },
    { icon: "pc", name: "PC2", x: 584, y: 406 }
  ],
  ports: [
    { name: "Ethernet 0/0/1", dot: [356, 250], x: 352, y: 250 },
    { name: "Ethernet 0/0/2", dot: [300, 297], x: 302, y: 292 },
    { name: "Ethernet 0/0/1", dot: [284, 391], x: 286, y: 386 },
    { name: "Ethernet 0/0/1", dot: [548, 254], x: 509, y: 261 },
    { name: "Ethernet 0/0/2", dot: [592, 303], x: 593, y: 297 },
    { name: "Ethernet 0/0/1", dot: [605, 395], x: 606, y: 390 }
  ],
  notes: [
    { text: "A", x: 180, y: 361 },
    { text: "B", x: 553, y: 361 },
    { text: "192.168.1.1", x: 196, y: 478 },
    { text: "192.168.1.2", x: 595, y: 481 }
  ]
};

class TopoNode extends BaseElement {
  static html = `
    <style>
    :host { position: absolute; display: flex; flex-direction: column; align-items: center; }
    .name { margin-top: 4px; font: 12px/16px "Liberation Sans", sans-serif; }
    :host([icon="pc"]) .name { margin-top: 0; }
    </style>
    <ui-icon></ui-icon><span class="name"><slot></slot></span>`;

  connectedCallback() {
    this._sR.querySelector("ui-icon").setAttribute("name", this.getAttribute("icon"));
  }
}
customElements.define("topo-node", TopoNode);

class TopoCanvas extends BaseElement {
  static html = `
    <style>
    :host { box-sizing: border-box; display: grid; grid-template: 1fr 16px / 1fr 16px; min-width: 0; border: 1px solid #8299ae; background: #f0f0f0; }
    .sheet { position: relative; overflow: hidden; background: #fff; color: #000; }
    .links { position: absolute; inset: 0; width: 100%; height: 100%; }
    .port, .note { position: absolute; white-space: pre; }
    .port { font: 11px/12px "Liberation Sans", sans-serif; }
    .note { padding: 0 2px; border: 1px solid #9db89a; background: #90ee90; font: 19px/24px "Liberation Mono", monospace; }
    </style>
    <div class="sheet"><svg class="links"></svg></div>
    <scroll-track direction="vertical"></scroll-track>
    <scroll-track direction="horizontal"></scroll-track>`;

  connectedCallback() {
    this.render();
  }

  render() {
    const { areas, links, devices, ports, notes } = topology;
    const $sheet = this._sR.querySelector(".sheet");
    const at = o => `style="left:${o.x}px;top:${o.y}px"`;

    $sheet.querySelector("svg").innerHTML =
      areas.map(a => `<rect x="${a.x + 0.5}" y="${a.y + 0.5}" width="${a.w}" height="${a.h}" fill="${a.fill}" stroke="${a.edge}"/>`).join("") +
      links.map(([x1, y1, x2, y2]) => `<line x1="${x1}" y1="${y1}" x2="${x2}" y2="${y2}" stroke="#000" stroke-width="2"/>`).join("") +
      ports.map(p => `<circle cx="${p.dot[0]}" cy="${p.dot[1]}" r="3.500" fill="#82dc3c"/>`).join("");

    $sheet.insertAdjacentHTML("beforeend",
      devices.map(d => `<topo-node icon="${d.icon}" ${at(d)}>${d.name}</topo-node>`).join("") +
      ports.map(p => `<span class="port" ${at(p)}>${p.name}</span>`).join("") +
      notes.map(n => `<span class="note" ${at(n)}>${n.text}</span>`).join(""));
  }
}
customElements.define("topo-canvas", TopoCanvas);

class EnspWindow extends BaseElement {
  static html = `
    <style>
    :host { display: flex; flex-direction: column; border: 1px solid #8998a5; border-width: 0 1px 1px; border-radius: 5px 6px 5px 5px; background: #a3bed5; }
    main { position: relative; flex: 1; display: grid; grid-template-columns: auto 1fr; gap: 4px; min-height: 0; padding: 6px 4px 5px 5px;
      background: linear-gradient(#7ba0b9, #a3bed5 7px); }
    .handle { position: absolute; right: 0; top: 319px; width: 4px; height: 54px; background: #e3edf5; }
    .handle svg { display: block; margin: 23px 0; }
    footer { display: flex; justify-content: space-between; align-items: center; height: 24px; padding: 0 17px 0 9px; border-top: 1px solid #8ba3b6;
      border-radius: 0 0 5px 5px; background: linear-gradient(#dfedf6, #bfd7e7); font-size: 14px; color: #2c5a86;
      white-space: pre; position: relative; }
    .count { font-family: "Noto Sans", "Noto Sans CJK TC", sans-serif; }
    a { color: inherit; }
    .grip { position: absolute; right: 1px; bottom: 1px; }
    </style>
    <ensp-header></ensp-header>
    <main>
      <device-palette></device-palette>
      <topo-canvas></topo-canvas>
      <div class="handle"><svg width="4" height="8"><path fill="#6f8ca6" d="M4 0v8L0 4z"/></svg></div>
    </main>
    <footer><span class="count" lang="zh-TW">总数：4  选中：0</span><a href="#help">获取帮助与反馈</a><svg class="grip" width="12" height="12"><path stroke="#8fabc0" d="M1 11L11 1M5 11l6-6M9 11l2-2"/></svg></footer>`;
}
customElements.define("ensp-window", EnspWindow);

class GuestTaskbar extends BaseElement {
  static html = `
    <style>
    :host { box-sizing: border-box; display: flex; align-items: center; height: 43px; padding: 0 1px 2px 2px; background: #d4d0c8; border-top: 1px solid #fff; color: #000; }
    button { all: unset; box-sizing: border-box; display: flex; align-items: center; justify-content: center; height: 38px; }
    .start { width: 47px; border: 1px solid; border-color: #fff #404040 #404040 #fff; box-shadow: inset -1px -1px #808080; font-size: 12px; }
    .quick { display: flex; }
    .quick button { width: 50px; }
    .quick .active { width: 48px; background: #fff; border: 1px solid; border-color: #404040 #fff #fff #404040; }
    hr { width: 1px; height: 22px; margin: 0 5px 0 4px; border: 0; border-left: 1px solid #808080; background: #fff; }
    hr.grip { height: 34px; margin: 0 8px; }
    .lang { display: flex; align-items: center; margin-left: auto; font: 10px/16px "DejaVu Sans Mono", monospace; }
    .lang hr.grip { height: 36px; }
    .tray { box-sizing: border-box; display: flex; align-items: center; gap: 6px; height: 38px; margin-left: 3px; padding: 0 2px 0 5px;
      border: 1px solid; border-color: #808080 #fff #fff #808080; font: 10px/16px "DejaVu Sans Mono", monospace; text-align: center; }
    time { margin-left: 4px; }
    </style>
    <button type="button" class="start"><ui-icon name="winFlag"></ui-icon>开始</button>
    <hr class="grip">
    <div class="quick">
      ${iconButtons([["server", "服务器管理器"], ["shell", "PowerShell"], ["explorer", "资源管理器"]])}
      <button type="button" class="active" aria-label="eNSP"><ui-icon name="enspBig"></ui-icon></button>
    </div>
    <div class="lang">
      <hr class="grip"><span>CH</span><hr><ui-icon name="ime"></ui-icon><hr><ui-icon name="blueHelp"></ui-icon><hr><ui-icon name="langOpts"></ui-icon>
    </div>
    <div class="tray">
      <ui-icon name="chevrons"></ui-icon>
      <ui-icon name="flag"></ui-icon>
      <ui-icon name="netWarn"></ui-icon>
      <ui-icon name="mute"></ui-icon>
      <time>16:39<br>2019/7/29</time>
      <ui-icon name="showDesk"></ui-icon>
    </div>`;
}
customElements.define("guest-taskbar", GuestTaskbar);

class GuestScreen extends BaseElement {
  static html = `
    <style>
    :host { box-sizing: border-box; display: flex; flex-direction: column; height: 100%; aspect-ratio: 16 / 10; padding-top: 1px;
      background: linear-gradient(90deg, #58b8ac 6%, #2e3f86 6% 50%, #58b8ac 50%); }
    ensp-window { flex: 1; min-height: 0; }
    guest-taskbar { flex: none; }
    </style>
    <ensp-window></ensp-window>
    <guest-taskbar></guest-taskbar>`;
}
customElements.define("guest-screen", GuestScreen);

class HostTaskbar extends BaseElement {
  static html = `
    <style>
    :host { position: relative; display: flex; align-items: center; gap: 4px; height: 33px; padding: 0 3px 0 1px; border-top: 1px solid #666;
      background: linear-gradient(#ececec, #dedede); font-size: 13px; }
    button { all: unset; box-sizing: border-box; display: flex; align-items: center; gap: 5px; width: 262px; height: 32px; padding: 0 6px;
      border: 1px solid; border-color: #f4f4f4 #777 #888 #f4f4f4; border-radius: 2px; white-space: nowrap; background: #ebebeb; }
    .min { color: #888; }
    .min ui-icon { opacity: .6; }
    .active { background: #cfcfcf; border-color: #aaa; }
    .pager { position: relative; z-index: 1; box-sizing: border-box; margin-left: auto; width: 54px; height: 27px; border: 1px solid #c4c4c4;
      font: 17px/24px "Noto Sans", sans-serif; text-align: center; }
    .mark { position: absolute; right: 10px; top: 5px; font: 16px/20px "Liberation Sans", sans-serif; color: #fffc; text-shadow: 1px 1px 1px #bbb; }
    </style>
    <button type="button"><ui-icon name="chrome"></ui-icon>(1条消息)写文章–CSDN博客 – Go···</button>
    <button type="button" class="min"><ui-icon name="note"></ui-icon>[network_01 (~/桌面/note/Networ···</button>
    <button type="button" class="min"><ui-icon name="virt"></ui-icon>[虚拟系统管理器]</button>
    <button type="button" class="active"><ui-icon name="virt"></ui-icon>win2008 - QEMU/KVM</button>
    <button type="button"><ui-icon name="imgView"></ui-icon>图片</button>
    <div class="pager">1 / 4</div>
    <span class="mark">https://blog.csdn.net/ck784101777</span>`;
}
customElements.define("host-taskbar", HostTaskbar);

class HostDesktop extends BaseElement {
  static html = `
    <style>
    :host { display: flex; flex-direction: column; height: 100vh; }
    .stage { flex: 1; display: flex; justify-content: center; box-sizing: border-box; min-height: 0; padding: 5px 0 6px; background: #000; }
    </style>
    <top-panel></top-panel>
    <host-titlebar>win2008 - QEMU/KVM</host-titlebar>
    <host-menubar></host-menubar>
    <host-toolbar></host-toolbar>
    <div class="stage"><guest-screen></guest-screen></div>
    <host-taskbar></host-taskbar>`;
}
customElements.define("host-desktop", HostDesktop);
</script>
</body>
</html>
